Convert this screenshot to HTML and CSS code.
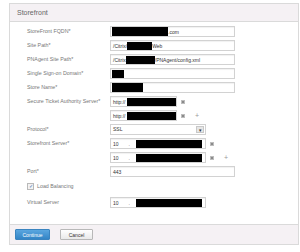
FILE: index.html
```html
<!DOCTYPE html>
<html lang="en">
<head>
  <meta charset="UTF-8">
  <title>Storefront</title>
  <link rel="stylesheet" href="styles.css">
</head>
<body>
  <div class="panel">
    <div class="panel-head">Storefront</div>

    <div class="panel-body">
      <div class="row">
        <span class="label">StoreFront FQDN*</span>
        <div class="field">
          <div class="input wide"><span class="mask mask-fqdn"></span>.com</div>
        </div>
      </div>

      <div class="row">
        <span class="label">Site Path*</span>
        <div class="field">
          <div class="input wide">/Citrix/<span class="mask mask-site"></span>Web</div>
        </div>
      </div>

      <div class="row">
        <span class="label">PNAgent Site Path*</span>
        <div class="field">
          <div class="input wide">/Citrix<span class="mask mask-pna"></span>/PNAgent/config.xml</div>
        </div>
      </div>

      <div class="row">
        <span class="label">Single Sign-on Domain*</span>
        <div class="field">
          <div class="input wide"><span class="mask mask-sso"></span></div>
        </div>
      </div>

      <div class="row gap-1">
        <span class="label">Store Name*</span>
        <div class="field">
          <div class="input wide"><span class="mask mask-store"></span></div>
        </div>
      </div>

      <div class="row gap-1">
        <span class="label">Secure Ticket Authority Server*</span>
        <div class="field-stack">
          <div class="field">
            <div class="input short"><span class="prefix">http://</span><span class="mask mask-sta"></span></div>
            <span class="icon-remove"></span>
          </div>
          <div class="field">
            <div class="input short"><span class="prefix">http://</span><span class="mask mask-sta"></span></div>
            <span class="icon-remove"></span>
            <span class="icon-add">+</span>
          </div>
        </div>
      </div>

      <div class="row">
        <span class="label">Protocol*</span>
        <div class="field">
          <div class="select">
            <span class="select-value">SSL</span>
            <span class="select-btn">&#9662;</span>
          </div>
        </div>
      </div>

      <div class="row">
        <span class="label">Storefront Server*</span>
        <div class="field-stack">
          <div class="field">
            <div class="input mid">10<span class="dot">.</span><span class="mask mask-ip"></span></div>
            <span class="icon-remove"></span>
          </div>
          <div class="field">
            <div class="input mid">10<span class="dot">.</span><span class="mask mask-ip"></span></div>
            <span class="icon-remove"></span>
            <span class="icon-add">+</span>
          </div>
        </div>
      </div>

      <div class="row gap-2">
        <span class="label">Port*</span>
        <div class="field">
          <div class="input wide">443</div>
        </div>
      </div>

      <label class="check-row">
        <span class="checkbox">&#10003;</span>
        Load Balancing
      </label>

      <div class="row">
        <span class="label">Virtual Server</span>
        <div class="field">
          <div class="input mid">10<span class="dot">.</span><span class="mask mask-ip"></span></div>
        </div>
      </div>
    </div>

    <div class="panel-foot">
      <button class="btn btn-primary">Continue</button>
      <button class="btn">Cancel</button>
    </div>
  </div>
</body>
</html>
```

FILE: styles.css
```css
:root {
  --border-color: #dadada;
  --band-color: #f5f1f4;
  --label-color: #777777;
  --text-color: #333333;
  --blue: #3d8fcf;
}

body {
  margin: 0;
  background-color: #ffffff;
  font-family: 'Liberation Sans', Arial, sans-serif;
  color: var(--text-color);
}

.panel {
  margin: 3px 1px 0 9px;
  border: 1px solid var(--border-color);
}

.panel-head {
  height: 17px;
  line-height: 17px;
  padding-left: 7px;
  font-size: 7px;
  color: #666666;
  background-color: var(--band-color);
  border-bottom: 1px solid var(--border-color);
}

.panel-body {
  padding: 4px 0 13px 17px;
}

.row {
  display: grid;
  grid-template-columns: 83px auto;
  margin-bottom: 3px;
}

.row.gap-1 {
  margin-top: 1px;
}

.row.gap-2 {
  margin-top: 2px;
}

.label {
  font-size: 5.3px;
  line-height: 10px;
  color: var(--label-color);
  white-space: nowrap;
}

.field-stack {
  display: flex;
  flex-direction: column;
  gap: 3px;
}

.field {
  display: flex;
  align-items: center;
}

.input {
  box-sizing: border-box;
  height: 11px;
  display: flex;
  align-items: center;
  padding-left: 2px;
  border: 1px solid #d2d2d2;
  box-shadow: inset 0 1px 1px rgba(0, 0, 0, 0.06);
  font-size: 5px;
  color: var(--text-color);
  white-space: nowrap;
  overflow: hidden;
}

.input.wide {
  width: 125px;
}

.input.short {
  width: 67px;
}

.input.mid {
  width: 96px;
}

.prefix {
  flex-shrink: 0;
}

.mask {
  display: inline-block;
  flex-shrink: 0;
  height: 8px;
  background-color: #000000;
}

.mask-fqdn {
  width: 56px;
  height: 9px;
  margin-left: -1px;
}

.mask-site {
  width: 25px;
}

.mask-pna {
  width: 29px;
}

.mask-sso {
  width: 12px;
  margin-left: -1px;
}

.mask-store {
  width: 31px;
  height: 9px;
  margin-left: -1px;
}

.mask-sta {
  width: 49px;
  margin-left: 1px;
}

.mask-ip {
  width: 66px;
}

.dot {
  margin: 0 6px 0 10px;
  color: #555555;
}

.icon-remove {
  width: 4px;
  height: 4px;
  margin-left: 4px;
  border: 1px solid #bdbdbd;
  background:
    linear-gradient(45deg, transparent 42%, #8a8a8a 42%, #8a8a8a 58%, transparent 58%),
    linear-gradient(-45deg, transparent 42%, #8a8a8a 42%, #8a8a8a 58%, transparent 58%);
  box-sizing: border-box;
}

.icon-add {
  margin-left: 10px;
  font-size: 7px;
  line-height: 7px;
  color: #9a9a9a;
}

.select {
  box-sizing: border-box;
  width: 96px;
  height: 11px;
  display: flex;
  border: 1px solid #d2d2d2;
  font-size: 5px;
}

.select-value {
  flex: 1;
  padding-left: 2px;
  line-height: 9px;
}

.select-btn {
  width: 8px;
  margin: 1px;
  background-color: #e6e6e6;
  border: 1px solid #c8c8c8;
  box-sizing: border-box;
  font-size: 5px;
  line-height: 6px;
  text-align: center;
  color: #333333;
}

.check-row {
  display: flex;
  align-items: center;
  gap: 3px;
  height: 8px;
  margin: 5px 0 7px;
  font-size: 5.3px;
  color: var(--label-color);
}

.checkbox {
  width: 5px;
  height: 5px;
  border: 1px solid #b9b9b9;
  background-color: #f3f3f3;
  font-size: 5px;
  line-height: 5px;
  text-align: center;
  color: #3a6fb0;
}

.panel-foot {
  display: flex;
  gap: 10px;
  height: 19px;
  align-items: center;
  padding-left: 5px;
  background-color: var(--band-color);
  border-top: 1px solid var(--border-color);
}

.btn {
  height: 11px;
  padding: 0;
  font-family: inherit;
  font-size: 5px;
  border: 1px solid #b8b8b8;
  border-radius: 1px;
  background: linear-gradient(#ffffff, #e9e9e9);
  color: #333333;
  width: 33px;
}

.btn-primary {
  width: 35px;
  border-color: #3a84bf;
  background: linear-gradient(#5aa6df, #3385c6);
  color: #ffffff;
}
```
